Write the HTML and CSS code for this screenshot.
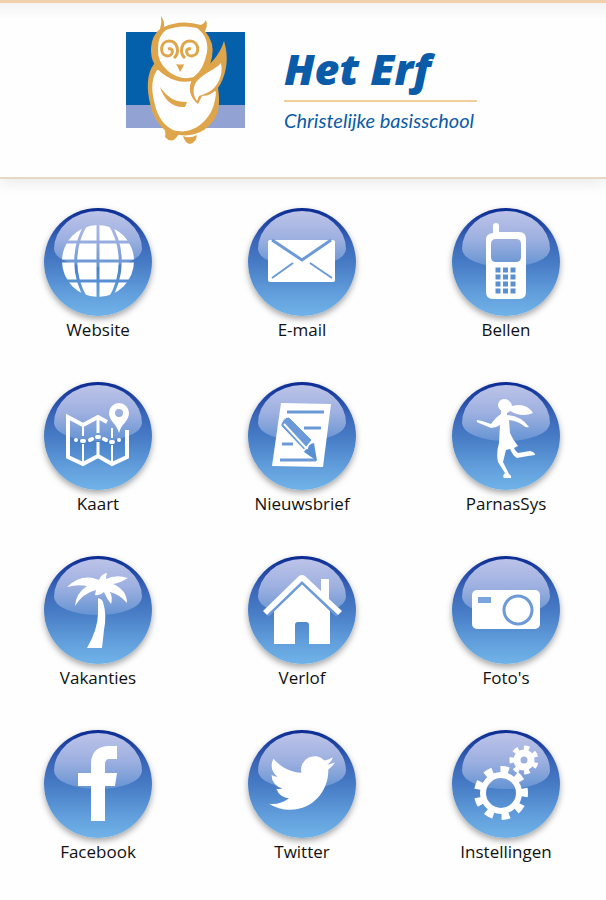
FILE: index.html
```html
<!DOCTYPE html>
<html lang="nl">
<head>
<meta charset="utf-8">
<meta name="viewport" content="width=device-width, initial-scale=1">
<title>Het Erf</title>
<link rel="stylesheet" href="styles.css">
</head>
<body>
<header class="header">
  <svg class="owl" viewBox="0 0 119 132" aria-hidden="true">
    <path fill="#0560ab" d="M0 18h119v73H0z"/>
    <path fill="#92a3d3" d="M0 91h119v23H0z"/>
    <path class="gold" d="M38 112Q40 119 39 123Q44 129 49 125L54 119zM57 122Q64 125 71 121Q70 129 64 130Q59 129 57 122z"/>
    <path class="gold" d="M28 50C20 60 21 77 24 89C26 101 33 112 40 117C52 123 67 123 78 116C92 106 95 94 92 74L60 55z"/>
    <path fill="#fff" d="M31 56C24 67 26 80 29 91C32 104 39 112 47 116C57 119 64 117 71 113C82 106 89 95 90 78L62 56z"/>
    <path class="gold" d="M35 2Q39 8 38 13Q55 5 75 11Q79 9 80 6Q82 12 79 17Q89 29 86 43Q84 57 71 66Q54 71 40 62Q24 52 25 34Q26 21 34 15Q36 9 35 2z"/>
    <path fill="#fff" d="M40 16Q55 10 71 14Q83 23 81 38Q78 55 68 63Q54 67 42 57Q31 48 32 34Q32 22 40 16z"/>
    <path class="gold" d="M98 27C103 43 101 58 94 71C89 79 82 82 76 82L72 90C64 84 61 73 67 64C76 55 91 49 98 27z"/>
    <path fill="#fff" d="M95 49C97 58 94 68 88 74C84 78 79 80 73 82L71 87C66 80 67 72 71 67C79 58 89 56 95 49z"/>
    <path class="gold" d="M34 73C42 84 49 88 61 88L59 93C47 94 38 86 34 73zM50 50Q54 51 58 50Q57 54 54 58Q52 53 50 50z"/>
    <g class="eye">
      <path d="M48 44C54 39 52 27 43 27C34 27 33 41 41 42C48 42 48 33 42 35"/>
      <path d="M59 44C53 39 55 27 64 27C73 27 75 41 66 42C59 42 59 33 65 35"/>
    </g>
  </svg>
  <div class="brand">
    <h1 class="brand-name">Het Erf</h1>
    <p class="brand-sub">Christelijke basisschool</p>
  </div>
</header>

<nav class="menu">
  <a class="item" href="#website">
    <span class="orb"><svg viewBox="0 0 108 108" aria-hidden="true">
      <mask id="globe"><circle cx="54" cy="53" r="36" fill="#fff"/><path fill="none" stroke="#000" stroke-width="3" d="M54 12v82M14 34h80M14 53h80M14 73h80M43 15C28 38 28 68 43 92M65 15C80 38 80 68 65 92"/></mask>
      <path mask="url(#globe)" d="M0 0h108v108H0z"/>
    </svg></span>
    <span class="label">Website</span>
  </a>
  <a class="item" href="#email">
    <span class="orb"><svg viewBox="0 0 108 108" aria-hidden="true">
      <rect x="20" y="32" width="67" height="42" rx="2"/>
      <path class="blue-line" d="M24 32L54 52L83 32"/>
      <path class="blue-line thin" d="M24 70L45 55M62 55L84 70"/>
    </svg></span>
    <span class="label">E-mail</span>
  </a>
  <a class="item" href="#bellen">
    <span class="orb"><svg viewBox="0 0 108 108" aria-hidden="true">
      <path fill-rule="evenodd" d="M41 25V18Q41 15 44 15Q47 15 47 18V24H67Q74 24 74 31V84Q74 91 67 91H41Q34 91 34 84V31Q34 26 41 25zM44 31Q39 31 39 36V49Q39 54 44 54H64Q69 54 69 49V36Q69 31 64 31z"/>
      <path stroke="#5a90d2" stroke-width="5" stroke-dasharray="5 2.5" d="M43.500 62h20M43.500 69h20M43.500 76h20M43.500 83h20"/>
    </svg></span>
    <span class="label">Bellen</span>
  </a>
  <a class="item" href="#kaart">
    <span class="orb"><svg viewBox="0 0 108 108" aria-hidden="true">
      <g class="white-line">
        <path stroke-width="4" d="M63 40L54 35L39 43L24 35V75L39 82L54 74L68 82L83 75V48"/>
        <path stroke-width="3" d="M54 35V51M54 60V74"/>
        <path stroke-width="2" d="M39 43V54M39 62V82M68 46V56M68 63V82"/>
        <path stroke-width="4" stroke-linecap="round" d="M32 58h0M38 59h2M46 58L48 57M53 55h2M60 57L62 58M67 60h2M75 58h0"/>
      </g>
      <path fill-rule="evenodd" d="M75 51C73 42 65 39 65 31A10 10 0 0 1 85 31C85 39 77 42 75 51zM75 27a4 4 0 1 0 0 8a4 4 0 1 0 0-8z"/>
    </svg></span>
    <span class="label">Kaart</span>
  </a>
  <a class="item" href="#nieuwsbrief">
    <span class="orb"><svg viewBox="0 0 108 108" aria-hidden="true">
      <path d="M33 21L83 22L75 85L24 84z"/>
      <path class="blue-line" d="M39 30H76M56 46H73M34 62H45M32 78H68"/>
      <path fill="#6b9ad8" stroke="#fff" stroke-width="1" d="M33 42Q36 35 41 35L64 58L56 68L33 44z"/>
      <path fill="#5a90d2" d="M66 61L69 79L56 70Q57 67 60 67Q60 62 66 61z"/>
      <path fill="none" stroke="#fff" stroke-width="2" d="M36 42L58 66"/>
    </svg></span>
    <span class="label">Nieuwsbrief</span>
  </a>
  <a class="item" href="#parnassys">
    <span class="orb"><svg viewBox="0 0 108 108" aria-hidden="true">
      <circle cx="52" cy="23" r="6"/>
      <path d="M54 17Q59 19 60 24Q74 20 81 31Q70 36 58 29L55 31V33Q69 34 77 45Q74 46 72 44Q66 39 57 38L58 51Q61 58 66 64L62 66Q64 70 66 71L78 69Q83 70 83 73L76 74L65 76Q61 74 58 67L54 68L51 80L57 92Q60 94 59 96H52Q50 94 53 91L46 80Q44 71 47 61L48 43Q44 46 39 46L27 41Q24 40 25 38L30 39L39 42Q44 35 49 32V28z"/>
    </svg></span>
    <span class="label">ParnasSys</span>
  </a>
  <a class="item" href="#vakanties">
    <span class="orb"><svg viewBox="0 0 108 108" aria-hidden="true">
      <path d="M54 42Q58 43 59 46Q63 59 60 74L58 92H43Q54 73 54 57zM23 31Q37 18 52 23L55 24Q57 18 63 17Q62 20 62 23Q72 18 84 22Q76 27 69 28Q83 34 83 47Q75 38 66 36Q69 42 67 48Q63 43 60 36Q56 40 51 39L52 34Q39 37 31 50Q32 37 43 30Q34 28 23 31z"/>
    </svg></span>
    <span class="label">Vakanties</span>
  </a>
  <a class="item" href="#verlof">
    <span class="orb"><svg viewBox="0 0 108 108" aria-hidden="true">
      <path d="M54 28L82 55V88H61V69Q61 66 58 66H50Q47 66 47 69V88H26V55z"/>
      <path d="M15 55L51 20Q54 18 57 20L73 35V23H81V43L94 55L90 59L54 25L19 59z"/>
      <path fill="none" stroke="#6b9ada" stroke-width="2" d="M20 60L54 27L89 60"/>
    </svg></span>
    <span class="label">Verlof</span>
  </a>
  <a class="item" href="#fotos">
    <span class="orb"><svg viewBox="0 0 108 108" aria-hidden="true">
      <rect x="20" y="34" width="68" height="39" rx="5"/>
      <path fill="#7aa4de" d="M26 41h13v6H26z"/>
      <circle class="blue-line" cx="66" cy="54" r="14"/>
    </svg></span>
    <span class="label">Foto's</span>
  </a>
  <a class="item" href="#facebook">
    <span class="orb"><svg viewBox="0 0 108 108" aria-hidden="true">
      <path d="M47 91V56H34V43H47V34C47 22 54 16 65 16H73V29H66C62 29 61 31 61 35V43H73L71 56H61V91z"/>
    </svg></span>
    <span class="label">Facebook</span>
  </a>
  <a class="item" href="#twitter">
    <span class="orb"><svg viewBox="0 0 108 108" aria-hidden="true">
      <path transform="translate(21 20) scale(2.75)" d="M23.953 4.57a10 10 0 01-2.825.775 4.958 4.958 0 002.163-2.723c-.951.555-2.005.959-3.127 1.184a4.92 4.92 0 00-8.384 4.482C7.69 8.095 4.067 6.130 1.640 3.162a4.822 4.822 0 00-.666 2.475c0 1.710.870 3.213 2.188 4.096a4.904 4.904 0 01-2.228-.616v.060a4.923 4.923 0 003.946 4.827 4.996 4.996 0 01-2.212.085 4.936 4.936 0 004.604 3.417 9.867 9.867 0 01-6.102 2.105c-.390 0-.779-.023-1.170-.067a13.995 13.995 0 007.557 2.209c9.053 0 13.998-7.496 13.998-13.985 0-.210 0-.420-.015-.630A9.935 9.935 0 0024 4.590z"/>
    </svg></span>
    <span class="label">Twitter</span>
  </a>
  <a class="item" href="#instellingen">
    <span class="orb"><svg viewBox="0 0 108 108" aria-hidden="true">
      <g class="white-line">
        <circle cx="49" cy="63" r="18" stroke-width="6"/>
        <circle cx="49" cy="63" r="23" stroke-width="8" pathLength="90" stroke-dasharray="5 5" transform="rotate(-11 49 63)"/>
        <circle cx="72" cy="30" r="7" stroke-width="7"/>
        <circle cx="72" cy="30" r="12" stroke-width="5" pathLength="70" stroke-dasharray="5 5" transform="rotate(12 72 30)"/>
      </g>
    </svg></span>
    <span class="label">Instellingen</span>
  </a>
</nav>
</body>
</html>
```
FILE: styles.css
```css
* {
  box-sizing: border-box;
}

body {
  margin: 0;
  background: #fefefe;
  color: #111;
  font-family: "Open Sans", "Noto Sans", sans-serif;
}

.header {
  display: flex;
  justify-content: center;
  gap: 39px;
  padding: 11px 3px 31px 0;
  border-top: 3px solid #f1cfac;
  border-bottom: 2px solid #e6d9c3;
  background: linear-gradient(#f3f3f3, #fefefe 16px);
  box-shadow: 0 2px 16px rgba(0, 0, 0, 0.1);
}

.owl {
  width: 119px;
  height: 132px;
}

.gold {
  fill: #dfa54b;
}

.eye {
  fill: none;
  stroke: #dfa54b;
  stroke-width: 3;
}

.brand {
  padding-top: 30px;
  color: #0b5ca8;
  font-style: italic;
}

.brand-name {
  margin: 0;
  padding-bottom: 6px;
  border-bottom: 2px solid #f3cd98;
  font-size: 43px;
  font-weight: 800;
  line-height: 50px;
}

.brand-sub {
  margin: 6px 0 0;
  padding-right: 3px;
  font-family: Lato, sans-serif;
  font-size: 20px;
  font-weight: 400;
  line-height: 24px;
}

.menu {
  display: grid;
  grid-template-columns: repeat(3, 108px);
  justify-content: space-between;
  row-gap: 40px;
  padding: 29px 46px 32px 44px;
}

.item {
  display: flex;
  flex-direction: column;
  align-items: center;
  gap: 2px;
  color: inherit;
  text-decoration: none;
}

.orb {
  position: relative;
  width: 108px;
  height: 108px;
  border-radius: 50%;
  background: linear-gradient(#0a2a92, #3a66b8 30%, #4a80c8 55%, #629fdc 80%, #70b3e8);
  box-shadow: 0 3px 6px rgba(0, 0, 0, 0.35);
}

.orb::before {
  content: "";
  position: absolute;
  inset: 3px 10px 49px;
  border-radius: 50% 50% 50% 50% / 68% 68% 32% 32%;
  background: linear-gradient(#bcc3e8, #9db0e0 50%, #6694d3);
}

.orb svg {
  position: relative;
  display: block;
  width: 100%;
  height: 100%;
  fill: #fff;
}

.orb .blue-line {
  fill: none;
  stroke: #6c9ad8;
  stroke-width: 3;
}

.orb .thin {
  stroke-width: 2;
}

.white-line {
  fill: none;
  stroke: #fff;
}

.label {
  font-size: 17px;
  line-height: 24px;
  white-space: nowrap;
}
```
